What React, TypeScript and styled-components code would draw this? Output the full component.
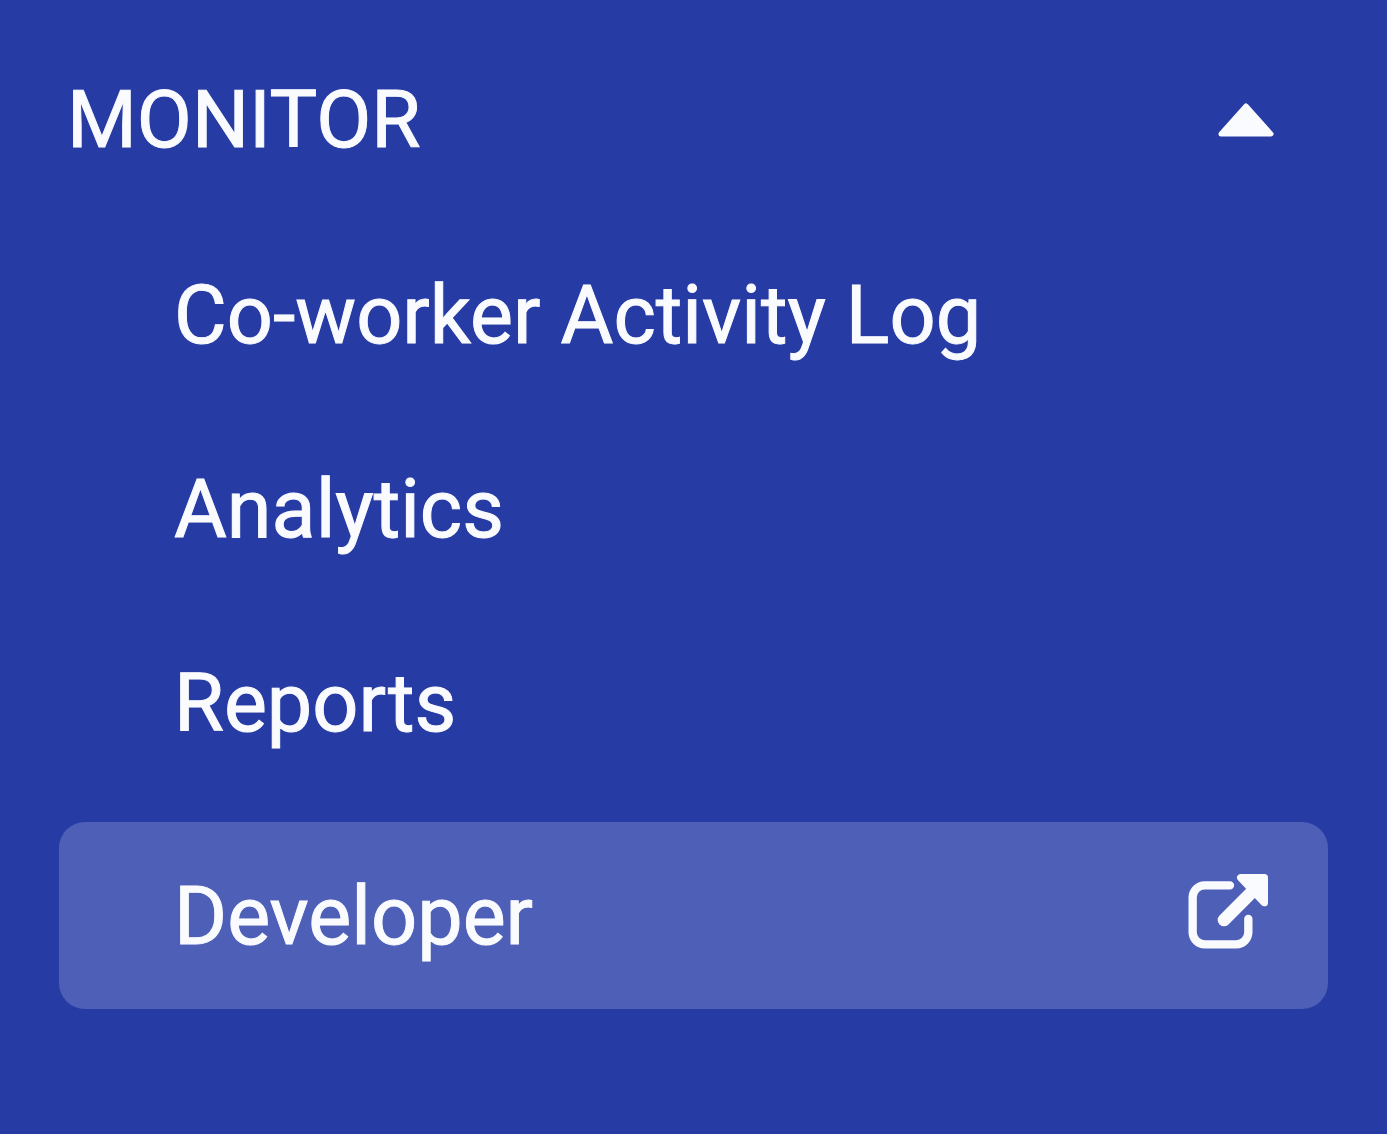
import React, { useState } from "react";
import styled, { createGlobalStyle } from "styled-components";

const GlobalStyle = createGlobalStyle`
  *, *::before, *::after { box-sizing: border-box; }
  body { margin: 0; background: #273ba5; }
`;

const Sidebar = styled.nav`
  min-height: 100vh;
  padding: 27px 59px;
  background: #273ba5;
  color: #fafbff;
  font-family: Roboto, "Liberation Sans", sans-serif;
  -webkit-text-stroke: 1px currentColor;
`;

const SectionToggle = styled.button`
  display: flex;
  align-items: center;
  justify-content: space-between;
  width: 100%;
  height: 186px;
  padding: 0 54px 0 8px;
  border: 0;
  background: none;
  color: inherit;
  font: inherit;
  font-size: 80px;
  line-height: 96px;
  cursor: pointer;
`;

const Caret = styled.svg<{ $open: boolean }>`
  display: block;
  width: 56px;
  height: 34px;
  transform: ${(p) => (p.$open ? "none" : "rotate(180deg)")};
`;

const Items = styled.ul`
  display: flex;
  flex-direction: column;
  gap: 7px;
  margin: 8px 0 0;
  padding: 0;
  list-style: none;
`;

const Item = styled.li<{ $separated?: boolean }>`
  margin-top: ${(p) => (p.$separated ? "19px" : "0")};
`;

const ItemLink = styled.a<{ $active?: boolean }>`
  display: flex;
  align-items: center;
  justify-content: space-between;
  height: 187px;
  padding: 0 60px 0 115px;
  border-radius: 26px;
  background: ${(p) => (p.$active ? "#4e5fb7" : "transparent")};
  color: inherit;
  font-size: 81px;
  line-height: 96px;
  text-decoration: none;
  white-space: nowrap;
`;

const Label = styled.span`
  padding-top: 3px;
`;

const LinkIcon = styled.svg`
  display: block;
  width: 80px;
  height: 75px;
  margin-bottom: 8px;
`;

const entries = [
  { label: "Co-worker Activity Log" },
  { label: "Analytics" },
  { label: "Reports" },
  { label: "Developer", active: true, external: true },
];

function ExternalIcon() {
  return (
    <LinkIcon viewBox="54 42 240 225" fill="none" stroke="currentColor" strokeLinecap="round" strokeLinejoin="round" aria-hidden="true">
      <path d="M180 76H104a36 36 0 0 0-36 36V217a36 36 0 0 0 36 36H199a36 36 0 0 0 36-36V177" strokeWidth="25" />
      <path d="M162 180L245 97" strokeWidth="38" />
      <path d="M212 53H283V128Z" fill="currentColor" strokeWidth="22" />
    </LinkIcon>
  );
}

export default function App() {
  const [open, setOpen] = useState(true);
  return (
    <>
      <GlobalStyle />
      <Sidebar aria-label="Main">
        <SectionToggle type="button" aria-expanded={open} onClick={() => setOpen(!open)}>
          MONITOR
          <Caret $open={open} viewBox="0 0 56 34" aria-hidden="true">
            <path d="M28 3L53 31H3Z" fill="currentColor" stroke="currentColor" strokeWidth="5" strokeLinejoin="round" />
          </Caret>
        </SectionToggle>
        {open && (
          <Items>
            {entries.map((e) => (
              <Item key={e.label} $separated={e.active}>
                <ItemLink href="#" $active={e.active} aria-current={e.active ? "page" : undefined}>
                  <Label>{e.label}</Label>
                  {e.external && <ExternalIcon />}
                </ItemLink>
              </Item>
            ))}
          </Items>
        )}
      </Sidebar>
    </>
  );
}
